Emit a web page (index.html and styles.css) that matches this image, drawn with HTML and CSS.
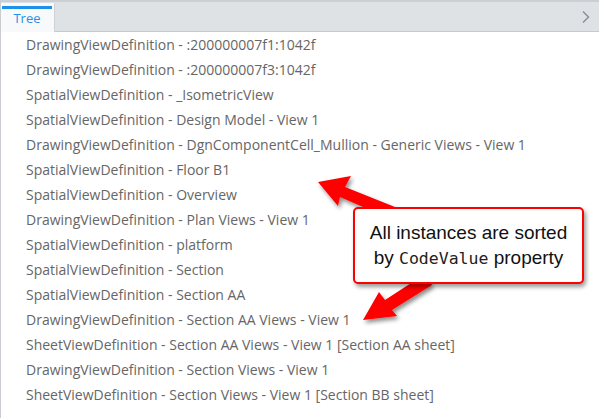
FILE: index.html
```html
<!DOCTYPE html>
<html>
<head>
<meta charset="utf-8">
<link rel="stylesheet" href="styles.css">
</head>
<body>
<div class="panel">
  <div class="tabbar">
    <div class="tab"><span class="tab-label">Tree</span></div>
    <div class="spacer"></div>
    <svg class="chev" width="10" height="14" viewBox="0 0 10 14"><path d="M2 1.5 L7.5 7 L2 12.5" fill="none" stroke="#8a9099" stroke-width="1.5"/></svg>
  </div>
  <ul class="tree">
    <li>DrawingViewDefinition - :200000007f1:1042f</li>
    <li>DrawingViewDefinition - :200000007f3:1042f</li>
    <li>SpatialViewDefinition - _IsometricView</li>
    <li>SpatialViewDefinition - Design Model - View 1</li>
    <li>DrawingViewDefinition - DgnComponentCell_Mullion - Generic Views - View 1</li>
    <li>SpatialViewDefinition - Floor B1</li>
    <li>SpatialViewDefinition - Overview</li>
    <li>DrawingViewDefinition - Plan Views - View 1</li>
    <li>SpatialViewDefinition - platform</li>
    <li>SpatialViewDefinition - Section</li>
    <li>SpatialViewDefinition - Section AA</li>
    <li>DrawingViewDefinition - Section AA Views - View 1</li>
    <li>SheetViewDefinition - Section AA Views - View 1 [Section AA sheet]</li>
    <li>DrawingViewDefinition - Section Views - View 1</li>
    <li>SheetViewDefinition - Section Views - View 1 [Section BB sheet]</li>
  </ul>
  <svg class="arrows" width="599" height="418" viewBox="0 0 599 418">
    <defs>
      <filter id="sh" x="-20%" y="-20%" width="150%" height="150%">
        <feGaussianBlur in="SourceAlpha" stdDeviation="2"/>
        <feOffset dx="2" dy="3" result="b"/>
        <feComponentTransfer><feFuncA type="linear" slope="0.45"/></feComponentTransfer>
        <feMerge><feMergeNode/><feMergeNode in="SourceGraphic"/></feMerge>
      </filter>
    </defs>
    <g filter="url(#sh)" fill="#ff0000">
      <polygon points="318,182 351,176 345,187 405,211 400,223 340,197 338,206"/>
      <polygon points="363,320 379,292 385,300 425,274 432,285 392,310 397,316"/>
    </g>
  </svg>
  <div class="callout">
    <p>All instances are sorted<br>by <code>CodeValue</code> property</p>
  </div>
</div>
</body>
</html>
```
FILE: styles.css
```css
* { box-sizing: border-box; }
html, body { margin: 0; padding: 0; background: #fff; }
body { width: 599px; height: 418px; overflow: hidden; }
.panel {
  position: relative;
  width: 599px;
  height: 418px;
  border-left: 1px solid #c9cdd1;
  font-family: "Open Sans", sans-serif;
}
.tabbar {
  display: flex;
  align-items: flex-end;
  height: 32px;
  background: #dfe2e5;
  border-top: 2px solid #cbcfd3;
  border-bottom: 1px solid #c6cacf;
}
.tab {
  width: 54px;
  height: 29px;
  margin-bottom: -1px;
  background: #f8f9fa;
  border-right: 1px solid #cfd3d6;
  padding: 3px 2px 0 1px;
  display: flex;
  flex-direction: column;
  align-items: center;
}
.tab::before {
  content: "";
  align-self: stretch;
  height: 3px;
  background: #1e90e8;
}
.tab-label {
  font-size: 13px;
  line-height: 16px;
  margin-top: 1px;
  color: #2a8ee6;
}
.spacer { flex: 1; }
.chev { align-self: center; margin-right: 8px; }
.tree {
  list-style: none;
  margin: 0;
  padding: 0 0 0 25px;
}
.tree li {
  height: 25px;
  line-height: 25px;
  font-size: 14px;
  color: #666;
  white-space: nowrap;
}
.arrows {
  position: absolute;
  left: -1px;
  top: 0;
  pointer-events: none;
}
.callout {
  position: absolute;
  left: 352px;
  top: 207px;
  width: 231px;
  height: 77px;
  background: #fff;
  border: 2px solid #ff0000;
  border-radius: 5px;
  box-shadow: 2px 3px 4px rgba(0,0,0,0.4);
  display: flex;
  align-items: center;
  justify-content: center;
}
.callout p {
  margin: 0 0 1px;
  text-align: center;
  font-family: "Liberation Sans", Arial, sans-serif;
  font-size: 19px;
  line-height: 25px;
  color: #111;
}
.callout code {
  font-family: "DejaVu Sans Mono", monospace;
  font-size: 16.5px;
  color: #222;
}
```
